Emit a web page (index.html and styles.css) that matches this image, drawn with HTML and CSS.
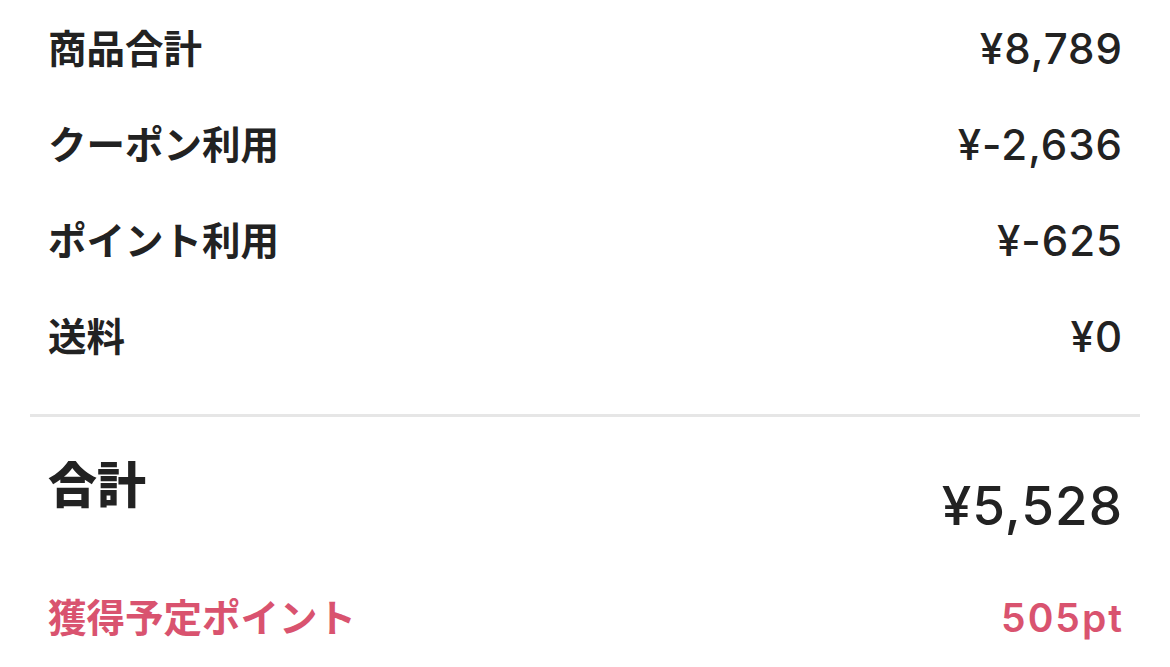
FILE: index.html
```html
<!DOCTYPE html>
<html lang="ja">

<head>
    <meta charset="UTF-8">
    <meta name="viewport" content="width=device-width, initial-scale=1.0">
    <title>ご注文内容の確認</title>
    <link rel="stylesheet" href="styles.css">
</head>

<body>
    <div class="summary">
        <div class="breakdown">
            <div class="row">
                <span class="label">商品合計</span>
                <span class="value">¥8,789</span>
            </div>
            <div class="row">
                <span class="label">クーポン利用</span>
                <span class="value">¥-2,636</span>
            </div>
            <div class="row">
                <span class="label">ポイント利用</span>
                <span class="value">¥-625</span>
            </div>
            <div class="row">
                <span class="label">送料</span>
                <span class="value">¥0</span>
            </div>
        </div>

        <div class="total">
            <div class="total-row">
                <span class="total-label">合計</span>
                <span class="total-value">¥5,528</span>
            </div>
            <div class="row points">
                <span class="label">獲得予定ポイント</span>
                <span class="value">505pt</span>
            </div>
        </div>
    </div>
</body>

</html>
```

FILE: styles.css
```css
body {
    margin: 0;
    background-color: #fff;
    color: #222;
    font-family: "Noto Sans CJK JP", "Noto Sans", sans-serif;
    overflow: hidden;
}

.summary {
    padding: 0 30px;
}

.breakdown {
    padding-bottom: 30px;
    border-bottom: 3px solid #e6e6e6;
}

.row {
    display: flex;
    justify-content: space-between;
    align-items: center;
    height: 96px;
    padding: 0 18px;
    font-size: 38.5px;
    font-weight: 600;
}

.label {
    position: relative;
    top: -2px;
}

.value {
    font-family: Inter, "Noto Sans", sans-serif;
    font-size: 42px;
    font-weight: 500;
    letter-spacing: 1px;
    margin-right: -1px;
}

.total {
    padding-top: 30px;
}

.total-row {
    display: flex;
    justify-content: space-between;
    padding: 0 18px;
    height: 122px;
}

.total-label {
    font-size: 49px;
    font-weight: 900;
    line-height: 1;
    padding-top: 10px;
}

.total-value {
    align-self: flex-end;
    font-family: Inter, "Noto Sans", sans-serif;
    font-size: 53px;
    font-weight: 500;
    letter-spacing: 1px;
    margin-right: -1px;
    line-height: 1;
    padding-bottom: 36px;
}

.points {
    color: #d9536f;
}

.points .value {
    font-size: 39px;
    font-weight: 600;
    letter-spacing: 2px;
    margin-right: -2px;
}
```
